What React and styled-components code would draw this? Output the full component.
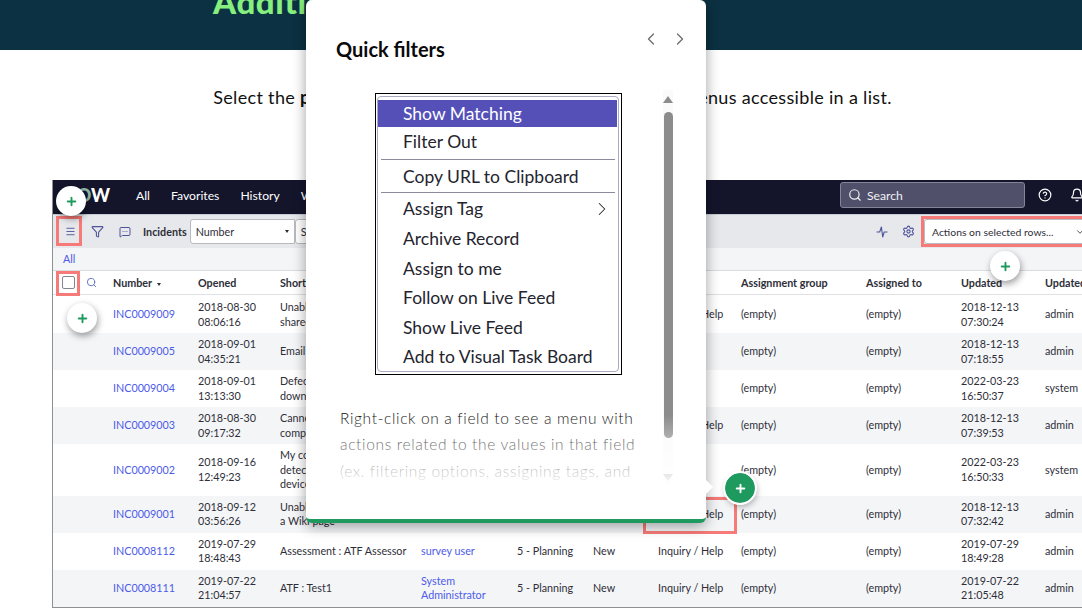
import React from 'react';
import styled, { createGlobalStyle } from 'styled-components'
import { Menu, Funnel, MessageSquareMore, Search, CircleHelp, Bell, Settings, Plus, ChevronLeft, ChevronRight, ChevronDown } from 'lucide-react'

const GlobalStyle = createGlobalStyle`
  html, body {
    margin: 0;
    width: 1082px;
    height: 612px;
    overflow: hidden;
    background: #fff;
    font-family: Lato, "Liberation Sans", sans-serif;
  }
`

const Page = styled.div`
  position: relative;
  width: 1082px;
  height: 612px;
  overflow: hidden;
`

const Banner = styled.header`
  height: 50px;
  box-sizing: border-box;
  display: flex;
  align-items: flex-end;
  padding: 0 0 31px 213px;
  background: #0b3142;
  overflow: hidden;
`

const BannerTitle = styled.h1`
  margin: 0;
  font-size: 33px;
  line-height: 36px;
  font-weight: 900;
  letter-spacing: 0.6px;
  white-space: nowrap;
  color: #86ef7d;
`

const Intro = styled.p`
  height: 130px;
  box-sizing: border-box;
  margin: 0;
  padding: 36px 0 0 23px;
  text-align: center;
  font-size: 18px;
  line-height: 22px;
  letter-spacing: 0.32px;
  color: #111;
  b { font-weight: 700; letter-spacing: 0.93px; }
`

const Frame = styled.section`
  width: 1030px;
  height: 428px;
  margin-left: 52px;
  box-sizing: border-box;
  border-left: 1px solid #8f9094;
  border-bottom: 1px solid #8f9094;
  overflow: hidden;
  color: #2e2e38;
  font-size: 10.75px;
`

const FrameInner = styled.div`
  width: 1040px;
`

const Nav = styled.nav`
  height: 34px;
  box-sizing: border-box;
  display: flex;
  align-items: center;
  padding: 0 9px 4px 0;
  background: #14152b;
  color: #fff;
  font-size: 12.2px;
`

const Logo = styled.div`
  width: 57px;
  margin-right: 26px;
  text-align: right;
  font-size: 18px;
  font-weight: 900;
  span { color: #8fb8a8; }
`

const NavItem = styled.span`
  margin-right: 21px;
`

const SearchBox = styled.div`
  margin-left: auto;
  width: 185px;
  height: 26px;
  box-sizing: border-box;
  display: flex;
  align-items: center;
  gap: 5px;
  padding-left: 7px;
  border: 1px solid #85859a;
  border-radius: 3px;
  background: #50506a;
  color: #f0f0f5;
`

const NavIcon = styled.span`
  display: flex;
  margin-left: ${props => props.$gap}px;
`

const Toolbar = styled.div`
  height: 34px;
  box-sizing: border-box;
  display: flex;
  align-items: center;
  background: #e6e8ec;
  border-top: 1px solid #c9cbd2;
`

const ToolIcon = styled.span`
  flex: 0 0 27px;
  display: flex;
  justify-content: center;
  margin-left: ${props => props.$first ? 4 : 0}px;
  color: #4f5399;
`

const ToolLabel = styled.b`
  margin: 0 3px 0 5px;
  font-weight: 700;
`

const SelectBox = styled.div`
  width: ${props => props.$width}px;
  height: 25px;
  box-sizing: border-box;
  display: flex;
  align-items: center;
  justify-content: space-between;
  padding: 0 ${props => props.$pad || 5}px;
  margin-left: ${props => props.$shift || 0}px;
  background: #fff;
  border: 1px solid #b8bac0;
  border-radius: 3px 0 0 3px;
  color: #2e2e38;
  font-size: ${props => props.$pad ? 10.4 : 10.75}px;
`

const Caret = styled.span`
  display: inline-block;
  width: 0;
  height: 0;
  margin-left: ${props => props.$gap || 0}px;
  vertical-align: middle;
  border-left: 2.5px solid transparent;
  border-right: 2.5px solid transparent;
  border-top: 3px solid #2e2e38;
`

const ToolRight = styled.div`
  margin-left: auto;
  display: flex;
  align-items: center;
  gap: 14px;
  color: #4f5399;
`

const Breadcrumb = styled.div`
  height: 22px;
  box-sizing: border-box;
  padding: 4px 0 0 10px;
  background: #f4f5f7;
  color: #4d5be8;
  line-height: 14px;
`

const Columns = `
  display: grid;
  grid-template-columns: 60px 85px 82px 141px 96px 76px 65px 83px 125px 95px 84px 1fr;
  align-items: center;
`

const HeadRow = styled.div`
  ${Columns}
  height: 25px;
  box-sizing: border-box;
  border-top: 1px solid #d9dbe0;
  border-bottom: 1px solid #dfe1e5;
  font-weight: 700;
  white-space: nowrap;
`

const SelectCell = styled.div`
  display: flex;
  align-items: center;
  gap: 11px;
  padding-left: 9px;
  color: #5c6bc0;
`

const Checkbox = styled.span`
  width: 13px;
  height: 13px;
  box-sizing: border-box;
  border: 1px solid #85868c;
  border-radius: 2px;
  background: #fff;
`

const Row = styled.div`
  ${Columns}
  padding: ${props => props.$first ? 5 : 4}px 0 4px;
  line-height: 14.5px;
  background: ${props => props.$odd ? '#f4f5f7' : '#fff'};
`

const Cell = styled.div`
  padding-right: ${props => props.$wide ? 8 : 14}px;
`

const LinkCell = styled(Cell)`
  color: #4d5be8;
`

const Highlight = styled.div`
  position: absolute;
  left: ${props => props.$x}px;
  top: ${props => props.$y}px;
  width: ${props => props.$w}px;
  height: ${props => props.$h}px;
  box-sizing: border-box;
  border: 3px solid #f67a78;
`

const Hotspot = styled.span`
  position: absolute;
  left: ${props => props.$x - 15}px;
  top: ${props => props.$y - 15}px;
  width: 30px;
  height: 30px;
  display: flex;
  align-items: center;
  justify-content: center;
  border-radius: 50%;
  background: ${props => props.$active ? '#1f9a5e' : '#fff'};
  color: ${props => props.$active ? '#fff' : '#1f9a5e'};
  outline: ${props => props.$active ? '2px solid #fff' : 'none'};
  box-shadow: 1px 3px 7px rgba(0, 0, 0, 0.4);
`

const Modal = styled.div`
  position: absolute;
  left: 306px;
  top: 0;
  width: 400px;
  height: 523px;
  box-sizing: border-box;
  border-bottom: 4px solid #1f9a5e;
  border-radius: 6px;
  background: #fff;
  box-shadow: 0 3px 14px rgba(0, 0, 0, 0.38);

  &::after {
    content: '';
    position: absolute;
    right: -5px;
    top: 482px;
    width: 10px;
    height: 10px;
    background: #fff;
    transform: rotate(45deg);
  }
`

const ModalHead = styled.div`
  height: 90px;
  box-sizing: border-box;
  display: flex;
  justify-content: space-between;
  padding: 28px 16px 0 30px;
`

const ModalTitle = styled.h2`
  margin: 9px 0 0;
  font-size: 20px;
  line-height: 24px;
  font-weight: 700;
  color: #0a0a0a;
`

const Pager = styled.div`
  display: flex;
  gap: 9px;
  height: 22px;
  align-items: center;
  color: #6e6e6e;
`

const ModalBody = styled.div`
  height: 400px;
  display: flex;
  padding: 0 33px 0 34px;
`

const Slide = styled.div`
  flex: 1;
  overflow: hidden;
  padding-top: 3px;
`

const MenuShot = styled.div`
  width: 247px;
  height: 282px;
  box-sizing: border-box;
  margin-left: 35px;
  padding: 2px 2px 2px 1px;
  border: 1px solid #000;
  background: #fff;
`

const MenuInner = styled.div`
  height: 100%;
  box-sizing: border-box;
  padding: 3px 0 0;
  border: 1px solid #a9a9c4;
  border-radius: 4px;
  font-size: 17.5px;
  color: #24242e;
`

const MenuRow = styled.div`
  height: ${props => props.$h}px;
  box-sizing: border-box;
  display: flex;
  align-items: center;
  justify-content: space-between;
  padding: 0 4px ${props => props.$lift || 0}px 25px;
  margin-right: 1px;
  background: ${props => props.$active ? '#5450b8' : 'transparent'};
  color: ${props => props.$active ? '#fff' : 'inherit'};
`

const MenuRule = styled.hr`
  height: 1px;
  margin: 0 3px;
  border: 0;
  background: #8c8a9c;
`

const Blurb = styled.p`
  margin: 30px 0 0;
  width: 303px;
  font-size: 15.5px;
  font-weight: 300;
  line-height: 26.4px;
  letter-spacing: 0.65px;
  color: #111;
`

const Scrollbar = styled.div`
  flex: 0 0 10px;
  height: 395px;
  display: flex;
  flex-direction: column;
  align-items: center;
  padding-top: 6px;
  box-sizing: border-box;
  background: #fafafa;
`

const ScrollArrow = styled.span`
  width: 0;
  height: 0;
  border-left: 5px solid transparent;
  border-right: 5px solid transparent;
  ${props => props.$down ? 'border-top: 7px solid #8c8c8c; margin-top: 36px;' : 'border-bottom: 7px solid #8c8c8c;'}
`

const ScrollThumb = styled.span`
  width: 9px;
  height: 326px;
  margin-top: 9px;
  border-radius: 5px;
  background: #8c8c8c;
`

const Fade = styled.div`
  position: absolute;
  left: 0;
  right: 0;
  top: 415px;
  height: 75px;
  background: linear-gradient(to bottom, rgba(255, 255, 255, 0), #fff);
`

const Spark = () => (
  <svg width="12" height="12" viewBox="0 0 12 12" fill="none" stroke="currentColor" strokeWidth="1.1">
    <path d="M0.5 6h3.2L5.4 1l1.3 10 1.5-5h3.3" strokeLinejoin="round" />
  </svg>
)

const RowData = [
  ['INC0009009', '2018-08-30 08:06:16', 'Unable to access the team shared folder.', '', 'Inquiry / Help', '2018-12-13 07:30:24', 'admin'],
  ['INC0009005', '2018-09-01 04:35:21', 'Email server is down.', '', 'Database', '2018-12-13 07:18:55', 'admin'],
  ['INC0009004', '2018-09-01 13:13:30', 'Defect tracking tool is down.', '', 'Software', '2022-03-23 16:50:37', 'system'],
  ['INC0009003', '2018-08-30 09:17:32', 'Cannot access my office computer', '', 'Inquiry / Help', '2018-12-13 07:39:53', 'admin'],
  ['INC0009002', '2018-09-16 12:49:23', 'My computer is not detecting the headphone device', '', 'Hardware', '2022-03-23 16:50:33', 'system'],
  ['INC0009001', '2018-09-12 03:56:26', 'Unable to post content on a\u00a0Wiki page', '', 'Inquiry / Help', '2018-12-13 07:32:42', 'admin'],
  ['INC0008112', '2019-07-29 18:48:43', 'Assessment : ATF Assessor', 'survey user', 'Inquiry / Help', '2019-07-29 18:49:28', 'admin'],
  ['INC0008111', '2019-07-22 21:04:57', 'ATF : Test1', 'System Administrator', 'Inquiry / Help', '2019-07-22 21:05:48', 'admin'],
]

const MenuItems = ['Archive Record', 'Assign to me', 'Follow on Live Feed', 'Show Live Feed', 'Add to Visual Task Board']

export default function App() {
  return (
    <Page>
      <GlobalStyle />
      <Banner>
        <BannerTitle>Additional features</BannerTitle>
      </Banner>
      <Intro>Select the <b>primary actions and the right-click context</b> menus accessible in a list.</Intro>

      <Frame>
        <FrameInner>
          <Nav>
            <Logo>N<span>O</span>W</Logo>
            <NavItem>All</NavItem>
            <NavItem>Favorites</NavItem>
            <NavItem>History</NavItem>
            <NavItem>Workspaces</NavItem>
            <SearchBox><Search size={14} />Search</SearchBox>
            <NavIcon $gap={13}><CircleHelp size={14} /></NavIcon>
            <NavIcon $gap={18}><Bell size={14} /></NavIcon>
          </Nav>
          <Toolbar>
            <ToolIcon $first><Menu size={11} /></ToolIcon>
            <ToolIcon><Funnel size={13} /></ToolIcon>
            <ToolIcon><MessageSquareMore size={12} /></ToolIcon>
            <ToolLabel>Incidents</ToolLabel>
            <SelectBox $width={105}>Number<Caret /></SelectBox>
            <SelectBox $width={120}>Search</SelectBox>
            <ToolRight>
              <Spark />
              <Settings size={13} />
              <SelectBox $width={169} $shift={-5} $pad={7}>
                <span>Actions on selected rows...</span>
                <ChevronDown size={10} />
              </SelectBox>
            </ToolRight>
          </Toolbar>
          <Breadcrumb>All</Breadcrumb>
          <HeadRow>
            <SelectCell><Checkbox /><Search size={11} /></SelectCell>
            <Cell>Number<Caret $gap={5} /></Cell>
            <Cell>Opened</Cell>
            <Cell $wide>Short description</Cell>
            <Cell>Caller</Cell>
            <Cell>Priority</Cell>
            <Cell>State</Cell>
            <Cell>Category</Cell>
            <Cell>Assignment group</Cell>
            <Cell>Assigned to</Cell>
            <Cell>Updated</Cell>
            <Cell>Updated by</Cell>
          </HeadRow>
          {RowData.map((row, i) => (
            <Row key={row[0]} $odd={i % 2 === 1} $first={i === 0}>
              <span />
              <LinkCell>{row[0]}</LinkCell>
              <Cell>{row[1]}</Cell>
              <Cell $wide>{row[2]}</Cell>
              <LinkCell>{row[3]}</LinkCell>
              <Cell>5 - Planning</Cell>
              <Cell>New</Cell>
              <Cell $wide>{row[4]}</Cell>
              <Cell>(empty)</Cell>
              <Cell>(empty)</Cell>
              <Cell>{row[5]}</Cell>
              <Cell>{row[6]}</Cell>
            </Row>
          ))}
        </FrameInner>
      </Frame>

      <Highlight $x={56} $y={216} $w={26} $h={30} />
      <Highlight $x={56} $y={271} $w={24} $h={25} />
      <Highlight $x={921} $y={216} $w={170} $h={31} />
      <Highlight $x={643} $y={497} $w={94} $h={37} />

      <Hotspot $x={71} $y={201}><Plus size={13} strokeWidth={3.5} /></Hotspot>
      <Hotspot $x={82} $y={318}><Plus size={13} strokeWidth={3.5} /></Hotspot>
      <Hotspot $x={1005} $y={266}><Plus size={13} strokeWidth={3.5} /></Hotspot>

      <Modal>
        <ModalHead>
          <ModalTitle>Quick filters</ModalTitle>
          <Pager>
            <ChevronLeft size={20} strokeWidth={1.6} />
            <ChevronRight size={20} strokeWidth={1.6} />
          </Pager>
        </ModalHead>
        <ModalBody>
          <Slide>
            <MenuShot>
              <MenuInner>
                <MenuRow $h={27} $active>Show Matching</MenuRow>
                <MenuRow $h={32} $lift={3}>Filter Out</MenuRow>
                <MenuRule />
                <MenuRow $h={32}>Copy URL to Clipboard</MenuRow>
                <MenuRule />
                <MenuRow $h={31}>Assign Tag<ChevronRight size={22} strokeWidth={1.1} /></MenuRow>
                {MenuItems.map(item => <MenuRow key={item} $h={29.5}>{item}</MenuRow>)}
              </MenuInner>
            </MenuShot>
            <Blurb>Right-click on a field to see a menu with actions related to the values in that field (ex. filtering options, assigning tags, and more).</Blurb>
          </Slide>
          <Scrollbar>
            <ScrollArrow />
            <ScrollThumb />
            <ScrollArrow $down />
          </Scrollbar>
        </ModalBody>
        <Fade />
      </Modal>

      <Hotspot $x={740} $y={488} $active><Plus size={13} strokeWidth={3.5} /></Hotspot>
    </Page>
  )
}
